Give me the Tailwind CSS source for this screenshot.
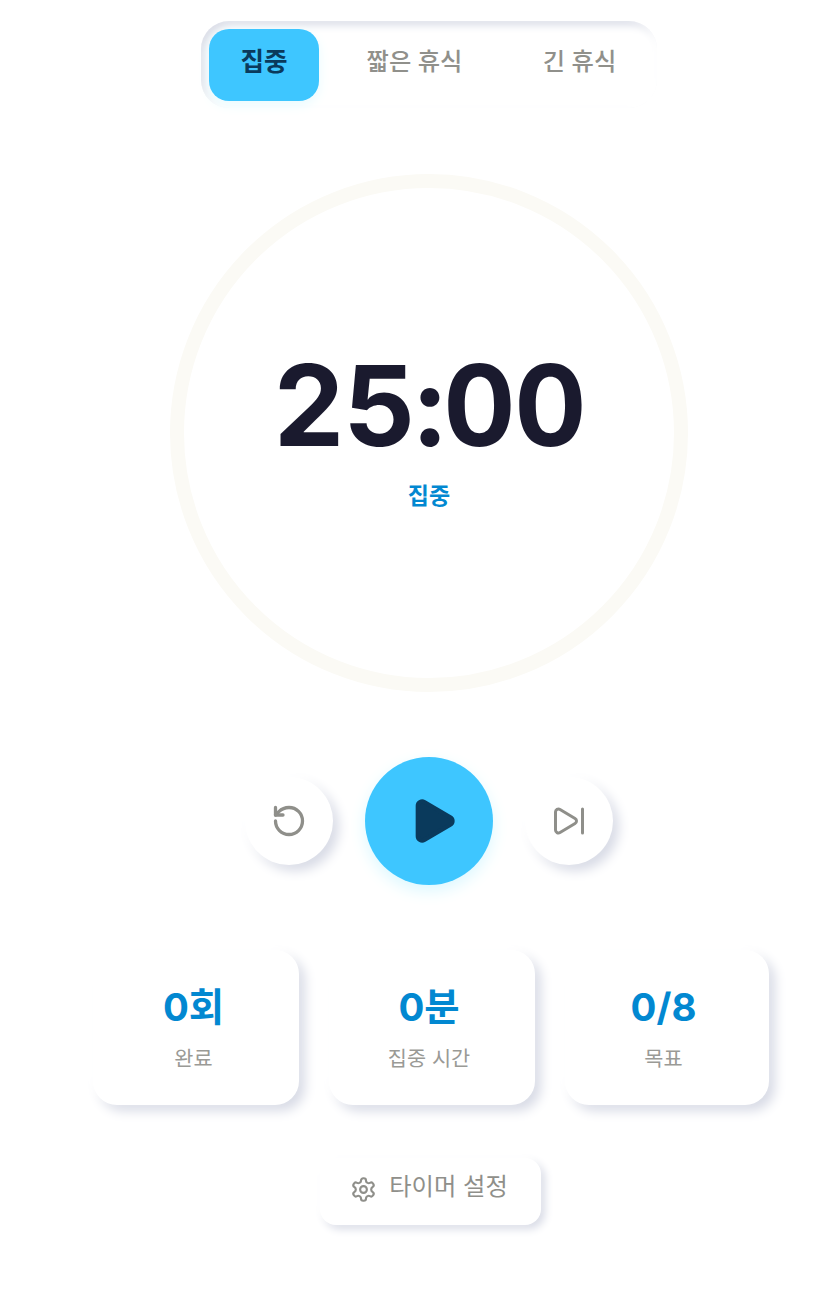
<!DOCTYPE html>
<html lang="ko">
<head>
<meta charset="UTF-8">
<meta name="viewport" content="width=device-width, initial-scale=1.0">
<title>타이머</title>
<script src="https://cdn.jsdelivr.net/npm/@tailwindcss/browser@4"></script>
</head>
<body class="bg-white font-['Inter','Noto_Sans_CJK_KR',sans-serif] overflow-hidden">
<div class="w-[860px] h-[1289px] flex flex-col items-center pt-[21px]">

  <!-- tabs -->
  <div class="ml-[-2px] w-[456px] h-[87px] p-2 flex rounded-[28px] shadow-[inset_-4px_-4px_8px_#ffffff,inset_4px_4px_8px_#d8dbe6]">
    <button class="w-[110px] h-[72px] pb-[6px] rounded-[20px] bg-[#3ec6ff] text-[#0a3a5c] text-[25.6px] font-bold shadow-[0_4px_12px_#e8fbff]">집중</button>
    <button class="w-[191px] h-[72px] pb-[7px] text-[#90908b] text-[24.3px] font-medium">짧은 휴식</button>
    <button class="w-[139px] h-[72px] pb-[7px] text-[#90908b] text-[24.3px] font-medium">긴 휴식</button>
  </div>

  <!-- ring -->
  <div class="mt-[66px] ml-[-2px] w-[518px] h-[518px] rounded-full border-[14px] border-[#fbfaf5] flex flex-col items-center pt-[150px]">
    <div class="text-[112px] leading-[135px] font-bold text-[#1a1a2e] tracking-[-1.4px] tabular-nums">25:00</div>
    <div class="mt-[7px] text-[23px] leading-[32px] font-semibold text-[#0288d1]">집중</div>
  </div>

  <!-- controls -->
  <div class="mt-[65px] ml-[-2px] flex items-center gap-8">
    <button class="w-[88px] h-[88px] rounded-full bg-white flex items-center justify-center shadow-[-6px_-6px_12px_#ffffff,6px_6px_12px_#d8dbe6]">
      <svg width="36" height="36" viewBox="0 0 24 24" fill="none" stroke="#8f8f8a" stroke-width="2.2" stroke-linecap="round" stroke-linejoin="round"><path d="M3 12a9 9 0 1 0 9-9 9.75 9.75 0 0 0-6.74 2.74L3 8"/><path d="M3 3v5h5"/></svg>
    </button>
    <button class="w-[128px] h-[128px] rounded-full bg-[#3ec6ff] flex items-center justify-center shadow-[0_6px_16px_#dcf8ff]">
      <svg width="52" height="52" viewBox="0 0 24 24" fill="#0a3a5c" stroke="#0a3a5c" stroke-width="2" stroke-linecap="round" stroke-linejoin="round" class="ml-[8px]"><path d="M5 5a2 2 0 0 1 3-1.73l12 7a2 2 0 0 1 0 3.46l-12 7A2 2 0 0 1 5 19z"/></svg>
    </button>
    <button class="w-[88px] h-[88px] rounded-full bg-white flex items-center justify-center shadow-[-6px_-6px_12px_#ffffff,6px_6px_12px_#d8dbe6]">
      <svg width="36" height="36" viewBox="0 0 24 24" fill="none" stroke="#8f8f8a" stroke-width="2" stroke-linecap="round" stroke-linejoin="round"><path d="M21 4v16"/><path d="M6.029 4.285A2 2 0 0 0 3 6v12a2 2 0 0 0 3.029 1.715l9.997-5.998a2 2 0 0 0 .003-3.432z"/></svg>
    </button>
  </div>

  <!-- stats -->
  <div class="mt-[65px] ml-[2px] flex gap-[30px]">
    <div class="w-[206px] h-[155px] pr-[5px] pt-[29px] rounded-[24px] bg-white flex flex-col items-center shadow-[-6px_-6px_12px_#ffffff,6px_6px_12px_#d8dbe6]">
      <div class="text-[38.4px] leading-[56px] font-bold text-[#0288d1]">0회</div>
      <div class="mt-[10px] text-[20.8px] leading-[28px] text-[#9a9a96]">완료</div>
    </div>
    <div class="w-[206px] h-[155px] pr-[6px] pt-[29px] rounded-[24px] bg-white flex flex-col items-center shadow-[-6px_-6px_12px_#ffffff,6px_6px_12px_#d8dbe6]">
      <div class="text-[38.4px] leading-[56px] font-bold text-[#0288d1]">0분</div>
      <div class="mt-[10px] text-[20.8px] leading-[28px] text-[#9a9a96]">집중 시간</div>
    </div>
    <div class="w-[204px] h-[155px] pr-[7px] pt-[29px] rounded-[24px] bg-white flex flex-col items-center shadow-[-6px_-6px_12px_#ffffff,6px_6px_12px_#d8dbe6]">
      <div class="text-[38.4px] leading-[56px] font-bold text-[#0288d1]">0/8</div>
      <div class="mt-[10px] text-[20.8px] leading-[28px] text-[#9a9a96]">목표</div>
    </div>
  </div>

  <!-- settings -->
  <button class="mt-[53px] ml-[1px] w-[221px] h-[67px] pr-[3px] rounded-[16px] bg-white flex items-center justify-center gap-3 text-[24.3px] text-[#8f8f8a] shadow-[-4px_-4px_8px_#ffffff,4px_4px_8px_#d8dbe6]">
    <svg width="27" height="27" viewBox="0 0 24 24" fill="none" stroke="#8f8f8a" stroke-width="1.9" stroke-linecap="round" stroke-linejoin="round" class="mt-[-4px]"><path d="M12.22 2h-.44a2 2 0 0 0-2 2v.18a2 2 0 0 1-1 1.73l-.43.25a2 2 0 0 1-2 0l-.15-.08a2 2 0 0 0-2.73.73l-.22.38a2 2 0 0 0 .73 2.73l.15.1a2 2 0 0 1 1 1.72v.51a2 2 0 0 1-1 1.74l-.15.09a2 2 0 0 0-.73 2.73l.22.38a2 2 0 0 0 2.73.73l.15-.08a2 2 0 0 1 2 0l.43.25a2 2 0 0 1 1 1.73V20a2 2 0 0 0 2 2h.44a2 2 0 0 0 2-2v-.18a2 2 0 0 1 1-1.73l.43-.25a2 2 0 0 1 2 0l.15.08a2 2 0 0 0 2.73-.73l.22-.39a2 2 0 0 0-.73-2.73l-.15-.08a2 2 0 0 1-1-1.74v-.5a2 2 0 0 1 1-1.74l.15-.09a2 2 0 0 0 .73-2.73l-.22-.38a2 2 0 0 0-2.73-.73l-.15.08a2 2 0 0 1-2 0l-.43-.25a2 2 0 0 1-1-1.73V4a2 2 0 0 0-2-2z"/><circle cx="12" cy="12" r="3"/></svg>
    <span class="mt-[-10px]">타이머 설정</span>
  </button>
</div>
</body>
</html>
